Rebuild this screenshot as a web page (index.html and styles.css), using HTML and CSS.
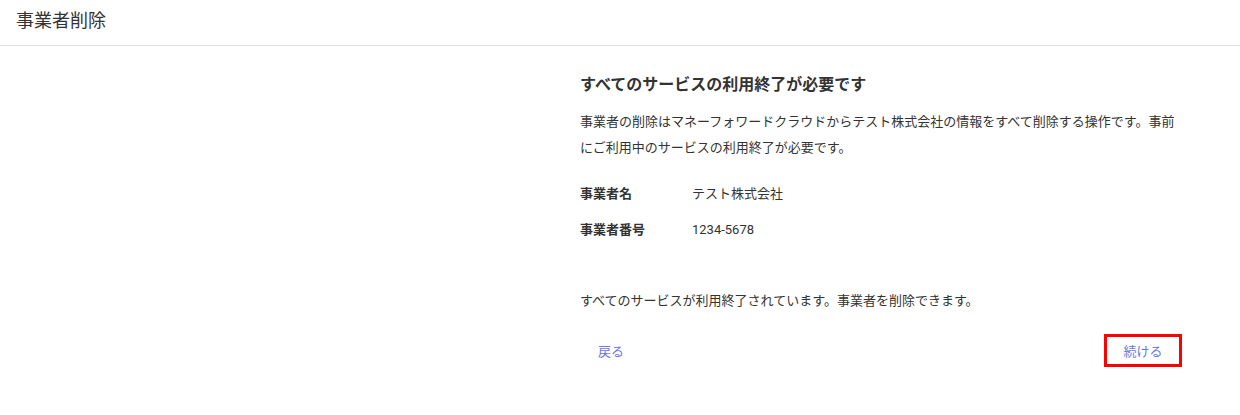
FILE: index.html
```html
<!DOCTYPE html>
<html lang="ja">
<head>
  <meta charset="UTF-8" />
  <meta name="viewport" content="width=device-width, initial-scale=1.0"/>
  <title>事業者削除</title>
  <link rel="stylesheet" href="styles.css">
</head>
<body>
<div class="page-header">
  <h1 class="page-title">事業者削除</h1>
</div>

<div class="page-body">
  <div class="content">
    <h2 class="section-title">すべてのサービスの利用終了が必要です</h2>
    <p class="description">事業者の削除はマネーフォワードクラウドからテスト株式会社の情報をすべて削除する操作です。事前にご利用中のサービスの利用終了が必要です。</p>

    <dl class="info-list">
      <div class="info-row">
        <dt>事業者名</dt>
        <dd>テスト株式会社</dd>
      </div>
      <div class="info-row">
        <dt>事業者番号</dt>
        <dd>1234-5678</dd>
      </div>
    </dl>

    <p class="status">すべてのサービスが利用終了されています。事業者を削除できます。</p>

    <div class="actions">
      <button class="text-btn">戻る</button>
      <button class="text-btn next-btn">続ける</button>
    </div>
  </div>
</div>
</body>
</html>
```

FILE: styles.css
```css
* {
  box-sizing: border-box;
}

body {
  margin: 0;
  font-family: Roboto, 'Noto Sans CJK JP', sans-serif;
  background-color: #FFFFFF;
  color: #333333;
}

/* ===== Header ===== */
.page-header {
  height: 46px;
  padding: 0 16px;
  display: flex;
  align-items: center;
  border-bottom: 1px solid #DDDDDD;
}

.page-title {
  margin: 0;
  font-size: 18px;
  font-weight: normal;
  line-height: 24px;
  position: relative;
  top: -2px;
}

/* ===== Body ===== */
.page-body {
  display: flex;
  padding-left: 580px;
}

.content {
  width: 602px;
  padding-top: 27px;
}

.section-title {
  margin: 0;
  font-size: 16px;
  font-weight: bold;
  line-height: 24px;
}

.description {
  margin: 12px 0 0;
  font-size: 13px;
  line-height: 26px;
}

.info-list {
  margin: 15px 0 0;
}

.info-row {
  display: flex;
  font-size: 13px;
  line-height: 20px;
  padding: 8px 0;
}

.info-row dt {
  width: 112px;
  font-weight: bold;
}

.info-row dd {
  margin: 0;
}

.status {
  margin: 40px 0 0;
  font-size: 13px;
  line-height: 26px;
}

.actions {
  display: flex;
  justify-content: space-between;
  align-items: center;
  margin-top: 20px;
}

.text-btn {
  height: 33px;
  padding: 0 15px;
  background: none;
  border: 3px solid transparent;
  color: #6877DC;
  font-family: inherit;
  font-size: 13px;
  cursor: pointer;
}

.next-btn {
  width: 78px;
  padding: 0;
  border-color: #FF0000;
}
```
